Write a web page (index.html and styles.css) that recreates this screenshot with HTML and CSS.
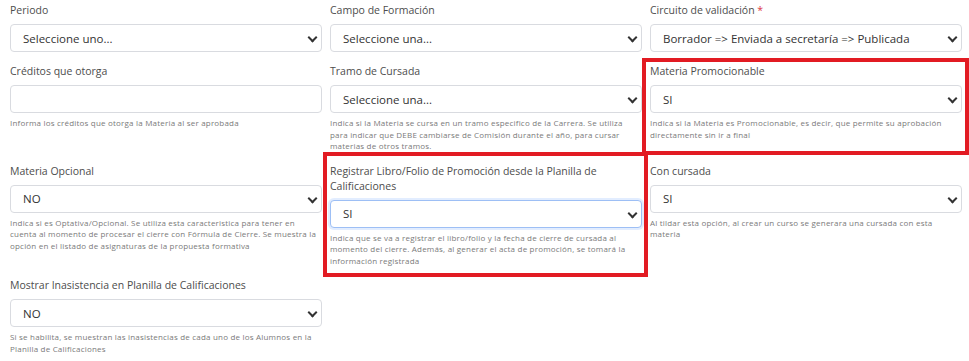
FILE: index.html
```html
<!DOCTYPE html>
<html lang="es">
<head>
    <meta charset="UTF-8">
    <meta name="viewport" content="width=device-width, initial-scale=1.0">
    <title>Materia</title>
    <link rel="stylesheet" href="styles.css">
</head>
<body>

    <!-- Form fields in a three column grid -->
    <form class="form-grid">

        <div class="field">
            <label for="periodo">Periodo</label>
            <div class="select-wrap">
                <select id="periodo"><option>Seleccione uno...</option></select>
            </div>
        </div>

        <div class="field">
            <label for="campo">Campo de Formación</label>
            <div class="select-wrap">
                <select id="campo"><option>Seleccione una...</option></select>
            </div>
        </div>

        <div class="field">
            <label for="circuito">Circuito de validación <span class="required">*</span></label>
            <div class="select-wrap">
                <select id="circuito"><option>Borrador =&gt; Enviada a secretaría =&gt; Publicada</option></select>
            </div>
        </div>

        <div class="field">
            <label for="creditos">Créditos que otorga</label>
            <input id="creditos" type="text">
            <p class="help">Informa los créditos que otorga la Materia al ser aprobada</p>
        </div>

        <div class="field">
            <label for="tramo">Tramo de Cursada</label>
            <div class="select-wrap">
                <select id="tramo"><option>Seleccione una...</option></select>
            </div>
            <p class="help">Indica si la Materia se cursa en un tramo especifico de la Carrera. Se utiliza para indicar que DEBE cambiarse de Comisión durante el año, para cursar materias de otros tramos.</p>
        </div>

        <div class="field marked marked-right">
            <label for="promocionable">Materia Promocionable</label>
            <div class="select-wrap">
                <select id="promocionable"><option>SI</option></select>
            </div>
            <p class="help">Indica si la Materia es Promocionable, es decir, que permite su aprobación directamente sin ir a final</p>
        </div>

        <div class="field">
            <label for="opcional">Materia Opcional</label>
            <div class="select-wrap">
                <select id="opcional"><option>NO</option></select>
            </div>
            <p class="help">Indica si es Optativa/Opcional. Se utiliza esta caracteristica para tener en cuenta al momento de procesar el cierre con Fórmula de Cierre. Se muestra la opción en el listado de asignaturas de la propuesta formativa</p>
        </div>

        <div class="field marked marked-center">
            <label for="libro">Registrar Libro/Folio de Promoción desde la Planilla de Calificaciones</label>
            <div class="select-wrap">
                <select id="libro" class="focused"><option>SI</option></select>
            </div>
            <p class="help">Indica que se va a registrar el libro/folio y la fecha de cierre de cursada al momento del cierre. Además, al generar el acta de promoción, se tomará la información registrada</p>
        </div>

        <div class="field">
            <label for="cursada">Con cursada</label>
            <div class="select-wrap">
                <select id="cursada"><option>SI</option></select>
            </div>
            <p class="help">Al tildar esta opción, al crear un curso se generara una cursada con esta materia</p>
        </div>

        <div class="field">
            <label for="inasistencia">Mostrar Inasistencia en Planilla de Calificaciones</label>
            <div class="select-wrap">
                <select id="inasistencia"><option>NO</option></select>
            </div>
            <p class="help">Si se habilita, se muestran las inasistencias de cada uno de los Alumnos en la Planilla de Calificaciones</p>
        </div>

    </form>

</body>
</html>
```

FILE: styles.css
```css
/* General page styling */
body {
    margin: 0;
    font-family: "Open Sans", "Liberation Sans", sans-serif;
    background: #fff;
    color: #444;
}

/* Three columns of fields */
.form-grid {
    display: grid;
    grid-template-columns: repeat(3, 312px);
    column-gap: 8px;
    row-gap: 12px;
    padding: 3px 10px 0 10px;
}

.field {
    display: flex;
    flex-direction: column;
    min-width: 0;
}

label {
    font-size: 10.5px;
    line-height: 15px;
    color: #4d4d4d;
    margin-bottom: 6px;
}

.required {
    color: #dc3545;
}

/* Selects and inputs */
.select-wrap {
    position: relative;
}

.select-wrap::after {
    content: "";
    position: absolute;
    right: 6px;
    top: 10px;
    width: 5px;
    height: 5px;
    border-right: 2px solid #333;
    border-bottom: 2px solid #333;
    transform: rotate(45deg);
    pointer-events: none;
}

select,
input {
    display: block;
    width: 100%;
    height: 28px;
    box-sizing: border-box;
    margin: 0;
    padding: 0 30px 0 12px;
    font-family: inherit;
    font-size: 11.5px;
    color: #333;
    background: #fff;
    border: 1px solid #d9dbe0;
    border-radius: 4px;
    appearance: none;
    -webkit-appearance: none;
    outline: none;
}

select.focused {
    border-color: #9dbff5;
    box-shadow: 0 0 0 2px rgba(13, 110, 253, 0.12);
}

/* Help text under a field */
.help {
    margin: 4px 0 0 0;
    font-size: 8px;
    line-height: 11.5px;
    letter-spacing: 0.2px;
    color: #7a7a7a;
}

/* Red boxes drawn round the fields under review */
.marked {
    border: 4px solid #e21b23;
}

.marked-right {
    margin: -6px -7px -3px -8px;
    padding: 2px 3px 0 4px;
}

.marked-center {
    margin: -12px -6px -11px -7px;
    padding: 8px 2px 7px 3px;
}
```
